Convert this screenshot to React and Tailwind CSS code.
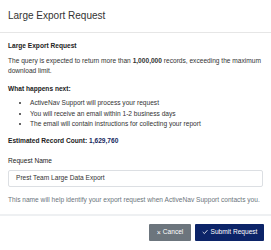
import React from 'react';

const steps = [
  'ActiveNav Support will process your request',
  'You will receive an email within 1-2 business days',
  'The email will contain instructions for collecting your report',
];

const LargeExportModal = () => {
  return (
    <div className="w-[271px] h-[250px] bg-white text-[#333] font-['Liberation_Sans',Arial,sans-serif] flex flex-col overflow-hidden">
      <div className="h-[33px] px-[8px] flex items-center border-b border-[#e6e6e6]">
        <h1 className="text-[10px] leading-[12px] text-[#333]">Large Export Request</h1>
      </div>

      <div className="px-[8px] pt-[8px] pb-[9px] text-[6.6px]">
        <h2 className="font-bold leading-[10px] text-[#222]">Large Export Request</h2>
        <p className="mt-[4.5px] leading-[10px]">
          The query is expected to return more than <span className="font-bold">1,000,000</span> records, exceeding the maximum download limit.
        </p>

        <h3 className="mt-[8.5px] font-bold leading-[10px] text-[#222]">What happens next:</h3>
        <ul className="mt-[4px] pl-[22px] list-disc leading-[10.5px]">
          {steps.map(s => (
            <li key={s}>{s}</li>
          ))}
        </ul>

        <p className="mt-[6px] leading-[10px] font-bold text-[#222]">
          Estimated Record Count: <span className="text-[#14275e]">1,629,760</span>
        </p>

        <label className="block mt-[10px] leading-[10px] text-[#222]">Request Name</label>
        <div className="mt-[4px] h-[17px] border border-[#dcdfe3] rounded-[2px] px-[7px] flex items-center">
          <span className="leading-[10px] text-[#333]">Prest Team Large Data Export</span>
        </div>
        <p className="mt-[8px] leading-[10px] text-[#6c757d]">
          This name will help identify your export request when ActiveNav Support contacts you.
        </p>
      </div>

      <div className="flex-1 border-t-2 border-[#eef0f2] flex items-start justify-end gap-[4px] px-[7px] pt-[8px]">
        <button className="h-[17px] w-[42px] bg-[#6c757d] text-white text-[6.6px] rounded-[1px] flex items-center justify-center gap-[2px]">
          <span className="text-[7px] leading-none">×</span>
          <span>Cancel</span>
        </button>
        <button className="h-[17px] w-[69px] bg-[#0c2468] text-white text-[6.6px] rounded-[1px] flex items-center justify-center gap-[3px]">
          <svg width="6" height="6" viewBox="0 0 12 12" fill="none" stroke="white" strokeWidth="1.6" strokeLinecap="round" strokeLinejoin="round">
            <path d="M2 6.5 L4.8 9.2 L10.5 2.8" />
          </svg>
          <span>Submit Request</span>
        </button>
      </div>
    </div>
  );
};

export default function App() {
  return <LargeExportModal />;
}
